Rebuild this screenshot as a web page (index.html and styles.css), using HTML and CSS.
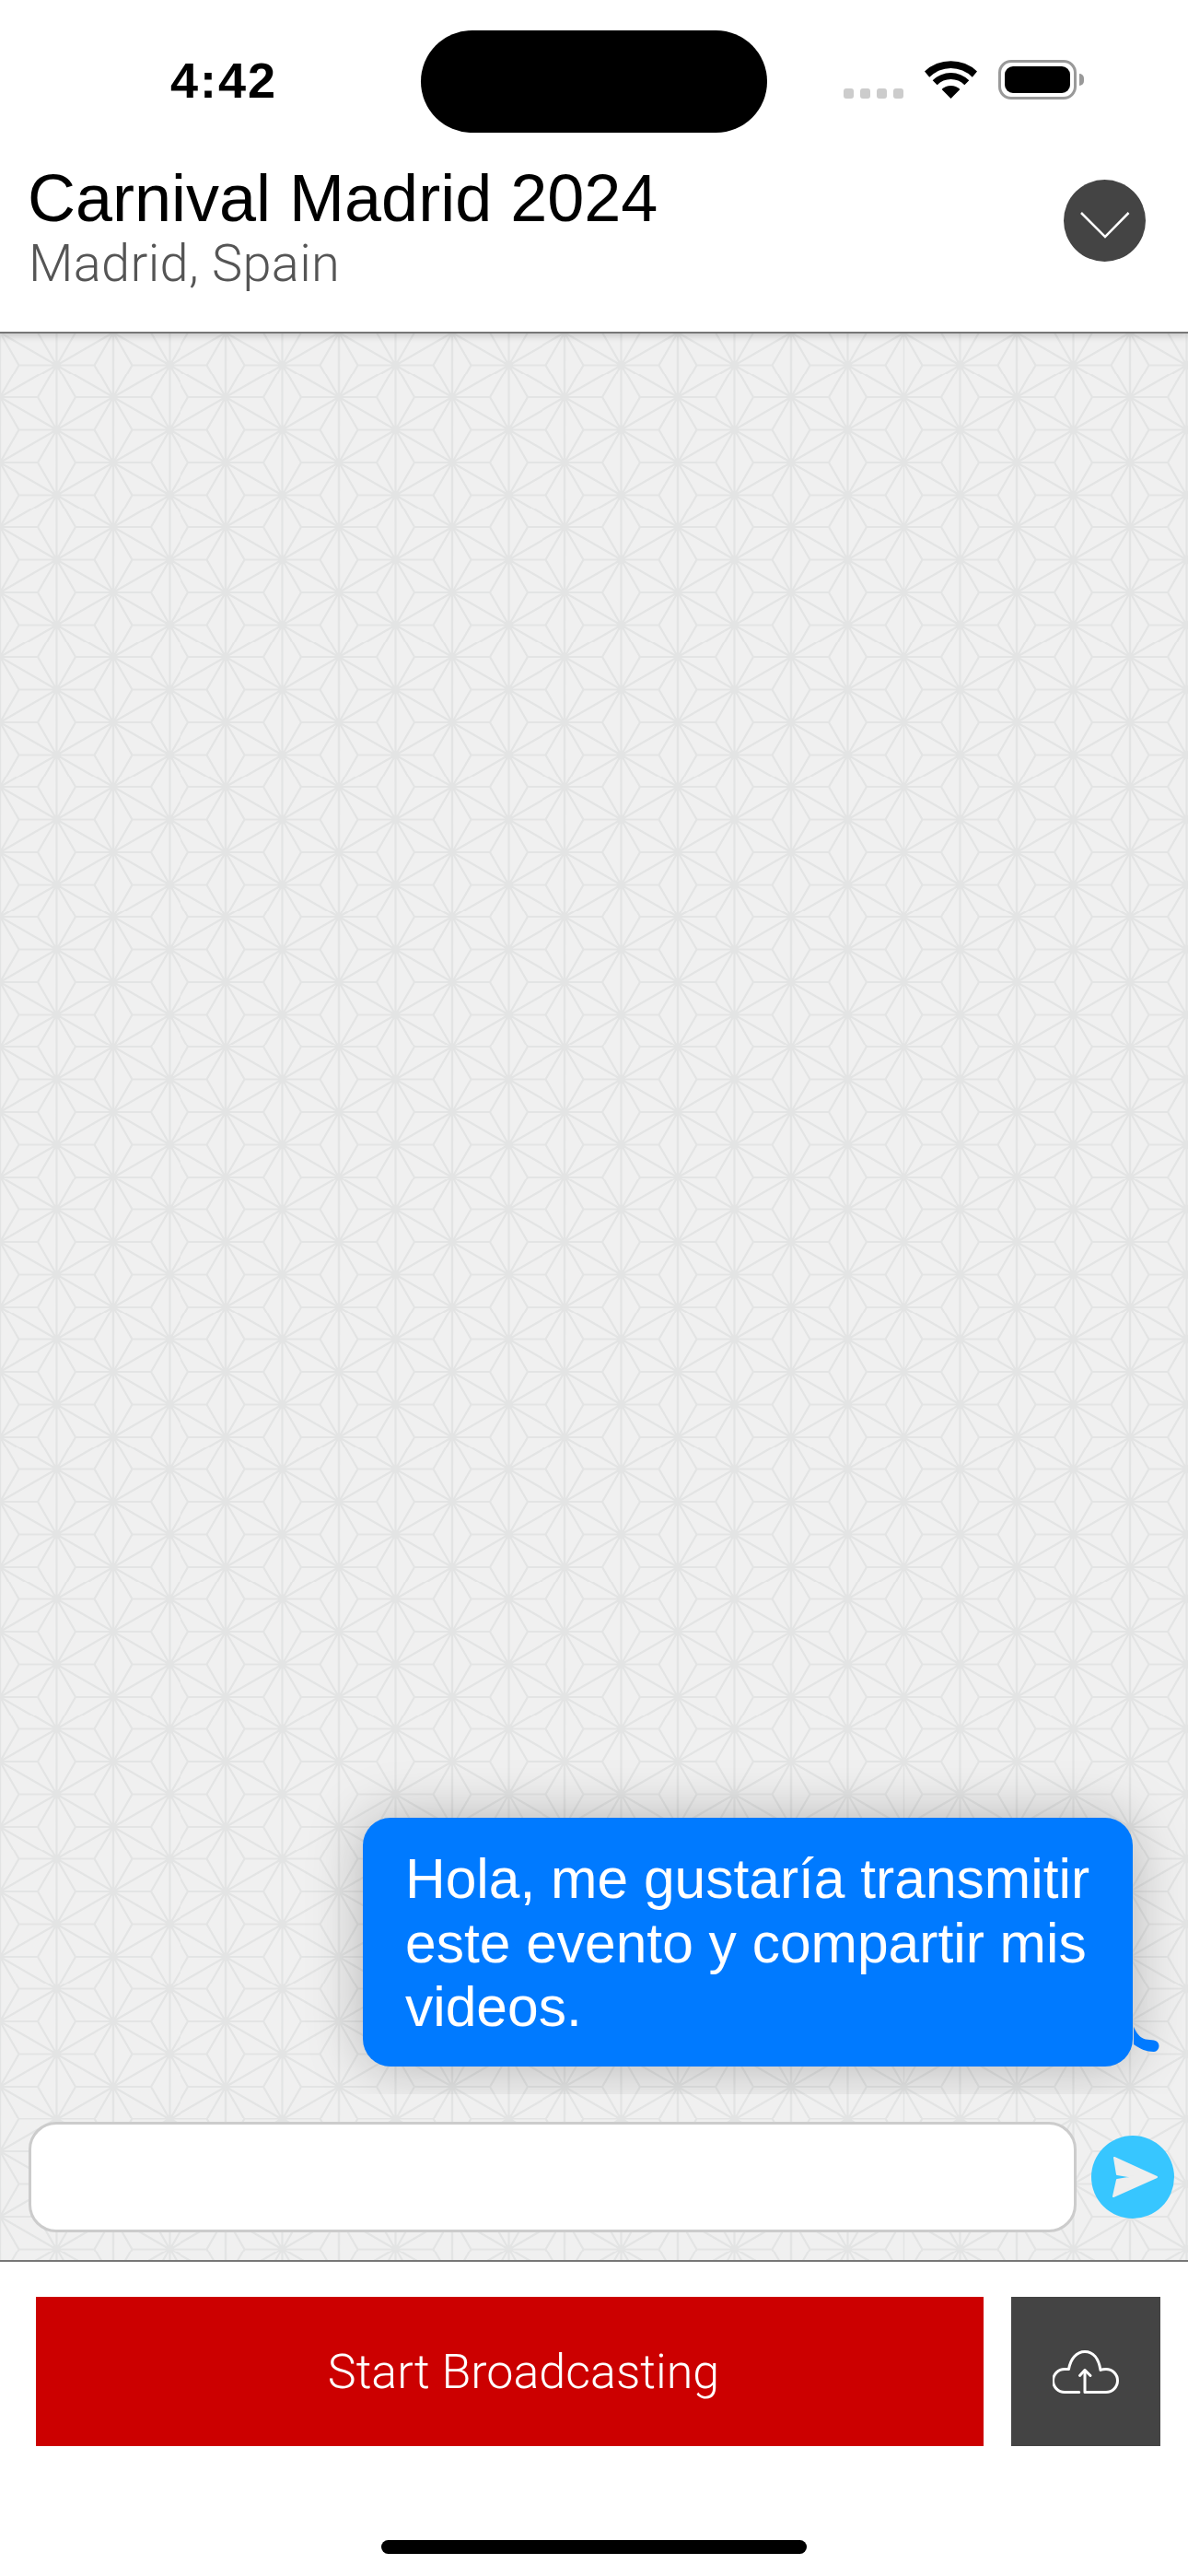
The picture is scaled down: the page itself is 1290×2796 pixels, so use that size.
FILE: index.html
```html
<!DOCTYPE html>
<html lang="es">
<head>
    <meta charset="UTF-8">
    <meta name="viewport" content="width=device-width, initial-scale=1.0">
    <title>Carnival Madrid 2024</title>
    <link rel="stylesheet" href="styles.css">
</head>
<body>
    <div class="header">
        <div class="status-bar">
            <div class="time">4:42</div>
            <div class="island"></div>
            <div class="status-icons">
                <div class="signal">
                    <span></span><span></span><span></span><span></span>
                </div>
                <svg class="wifi" width="57" height="42" viewBox="0 0 57 42">
                    <path d="M0 12.5A41.5 41.5 0 0 1 57 12.5L51.8 18.7A33 33 0 0 0 5.2 18.7Z"/>
                    <path d="M8.7 22.2A28 28 0 0 1 48.3 22.2L43.35 27.15A21 21 0 0 0 13.65 27.15Z"/>
                    <path d="M18.6 32.1A14 14 0 0 1 38.4 32.1L28.5 42Z"/>
                </svg>
                <div class="battery"><div class="battery-level"></div></div>
                <div class="battery-nub"></div>
            </div>
        </div>
        <div class="event-row">
            <div class="event-info">
                <h1>Carnival Madrid 2024</h1>
                <p>Madrid, Spain</p>
            </div>
            <button class="collapse-btn">
                <svg width="89" height="89" viewBox="0 0 89 89">
                    <polyline points="19,36 45,62 70.6,36" fill="none" stroke="#fff" stroke-width="2.5"/>
                </svg>
            </button>
        </div>
    </div>

    <div class="chat">
        <div class="messages">
            <div class="bubble">
                Hola, me gustaría transmitir este evento y compartir mis videos.
                <svg class="bubble-tail" width="32" height="28" viewBox="0 0 32 28">
                    <path d="M1 0C4 7 8 12 14 13.5L23 14.5A6.3 6.3 0 0 1 23 27C15 27 8 24 1 19Z"/>
                </svg>
            </div>
        </div>
        <div class="composer">
            <input class="message-input" type="text">
            <button class="send-btn">
                <svg width="90" height="90" viewBox="0 0 90 90">
                    <path d="M25 24L71 45L24 66L28 48L46 45L28 42Z" fill="#eee" stroke="#eee" stroke-width="2" stroke-linejoin="round"/>
                </svg>
            </button>
        </div>
    </div>

    <div class="footer">
        <div class="actions">
            <button class="btn btn-broadcast">Start Broadcasting</button>
            <button class="btn btn-upload">
                <svg width="72" height="47" viewBox="0 0 72 47" fill="none" stroke="#fff" stroke-width="3" stroke-linecap="round" stroke-linejoin="round">
                    <path d="M28.7 45.5H13A12.5 12.5 0 0 1 13 20.5H17.5C19.5 9 26 1.5 35 1.5C44 1.5 50 9 52 21.5C53.5 20.8 55.5 20.5 58 20.5A12.5 12.5 0 0 1 58 45.5H35V22"/>
                    <path d="M29.5 27.5L35 21.5L41 27.5"/>
                </svg>
            </button>
        </div>
        <div class="home-indicator"></div>
    </div>
</body>
</html>
```

FILE: styles.css
```css
* {
    box-sizing: border-box;
}
body {
    font-family: "Liberation Sans", Arial, sans-serif;
    margin: 0;
    width: 1290px;
    height: 2796px;
    background: #fff;
    color: #000;
    display: flex;
    flex-direction: column;
    overflow: hidden;
}
button {
    border: none;
    padding: 0;
    cursor: pointer;
    font-family: inherit;
}
svg {
    display: block;
}

/* Top area: status bar and event title */
.header {
    height: 362px;
    flex-shrink: 0;
    background: #fff;
    border-bottom: 2px solid #777;
    box-shadow: 0 2px 8px rgba(0, 0, 0, 0.2);
    position: relative;
    z-index: 2;
}
.status-bar {
    display: flex;
    align-items: flex-start;
    height: 144px;
    padding: 33px 0 0 185px;
}
.time {
    width: 272px;
    margin-top: 23px;
    font-size: 54px;
    line-height: 62px;
    font-weight: bold;
    letter-spacing: 2px;
}
.island {
    width: 376px;
    height: 111px;
    background: #000;
    border-radius: 56px;
}
.status-icons {
    display: flex;
    align-items: flex-end;
    margin: 32px 0 0 83px;
}
.signal {
    display: flex;
    gap: 7px;
    margin: 0 23px 1px 0;
}
.signal span {
    width: 11px;
    height: 11px;
    background: #ccc;
    border-radius: 3px;
}
.wifi {
    margin: 0 23px 1px 0;
}
.battery {
    width: 85px;
    height: 43px;
    padding: 4px;
    border: 3px solid #999;
    border-radius: 14px;
}
.battery-level {
    height: 100%;
    background: #000;
    border-radius: 9px;
}
.battery-nub {
    width: 5px;
    height: 13px;
    margin: 0 0 15px 3px;
    background: #999;
    border-radius: 0 6px 6px 0;
}
.event-row {
    display: flex;
    justify-content: space-between;
    padding: 31px 46px 0 30px;
}
.event-info h1 {
    margin: 0;
    font-size: 72px;
    line-height: 80px;
    font-weight: normal;
}
.event-info p {
    margin: 0 0 0 1px;
    font-family: Roboto, "Liberation Sans", sans-serif;
    font-size: 56px;
    line-height: 62px;
    font-weight: 300;
    letter-spacing: 0.3px;
    color: #555;
}
.collapse-btn {
    width: 89px;
    height: 89px;
    margin-top: 20px;
    background: #444;
    border-radius: 50%;
}

/* Chat area with the hemp-leaf wallpaper */
.chat {
    flex: 1;
    display: flex;
    flex-direction: column;
    background-color: #f0f0f0;
    background-image: url("data:image/svg+xml,%3Csvg xmlns='http://www.w3.org/2000/svg' width='122.7' height='70.53' viewBox='0 0 122.7 70.53'%3E%3Cdefs%3E%3Cfilter id='b' filterUnits='userSpaceOnUse' x='-10' y='-10' width='143' height='91'%3E%3CfeGaussianBlur stdDeviation='.55'/%3E%3C/filter%3E%3Cpath id='a' fill='none' stroke='%23e3e4e4' stroke-width='2.2' d='M0 0V70.53M61.35 0V70.53M122.7 0V70.53M0 0L122.7 70.53M122.7 0L0 70.53M0 0L20.45 35.27L0 70.53M20.45 35.27H102.25M122.7 0L102.25 35.27L122.7 70.53M40.9 0L61.35 35.27L81.8 0M40.9 70.53L61.35 35.27L81.8 70.53M0 0H40.9M81.8 0H122.7M0 70.53H40.9M81.8 70.53H122.7'/%3E%3C/defs%3E%3Cg filter='url(%23b)'%3E%3Cuse href='%23a'/%3E%3Cuse href='%23a' x='122.7'/%3E%3Cuse href='%23a' x='-122.7'/%3E%3Cuse href='%23a' y='70.53'/%3E%3Cuse href='%23a' y='-70.53'/%3E%3C/g%3E%3C/svg%3E");
    background-size: 122.7px 70.53px;
    background-position: 0 -1.2px;
}
.messages {
    flex: 1;
    display: flex;
    flex-direction: column;
    justify-content: flex-end;
    align-items: flex-end;
    padding: 0 60px 30px 0;
    overflow: hidden;
}
.bubble {
    position: relative;
    width: 836px;
    height: 270px;
    padding: 32px 30px 0 46px;
    background: #007aff;
    border-radius: 30px;
    box-shadow: 0 0 60px rgba(0, 0, 0, 0.25);
    color: #fff;
    font-size: 60.5px;
    line-height: 69.5px;
}
.bubble-tail {
    position: absolute;
    left: 836px;
    bottom: 15px;
    fill: #007aff;
}
.composer {
    display: flex;
    align-items: center;
    gap: 16px;
    padding: 30px 15px 30px 31px;
}
.message-input {
    flex: 1;
    height: 120px;
    background: #fff;
    border: 3px solid #ccc;
    border-radius: 30px;
}
.send-btn {
    width: 90px;
    height: 90px;
    background: #37c6ff;
    border-radius: 50%;
}

/* Bottom action buttons */
.footer {
    height: 343px;
    flex-shrink: 0;
    background: #fff;
    border-top: 2px solid #777;
    padding-top: 38px;
}
.actions {
    display: flex;
    gap: 30px;
    padding-left: 39px;
}
.btn {
    height: 162px;
    display: flex;
    align-items: center;
    justify-content: center;
    color: #fff;
}
.btn-broadcast {
    width: 1029px;
    padding-left: 30px;
    background: #c00;
    font-family: Roboto, "Liberation Sans", sans-serif;
    font-size: 52px;
    font-weight: 300;
}
.btn-upload {
    width: 162px;
    background: #444;
}
.home-indicator {
    width: 462px;
    height: 15px;
    margin: 102px auto 0;
    background: #000;
    border-radius: 8px;
}
```
